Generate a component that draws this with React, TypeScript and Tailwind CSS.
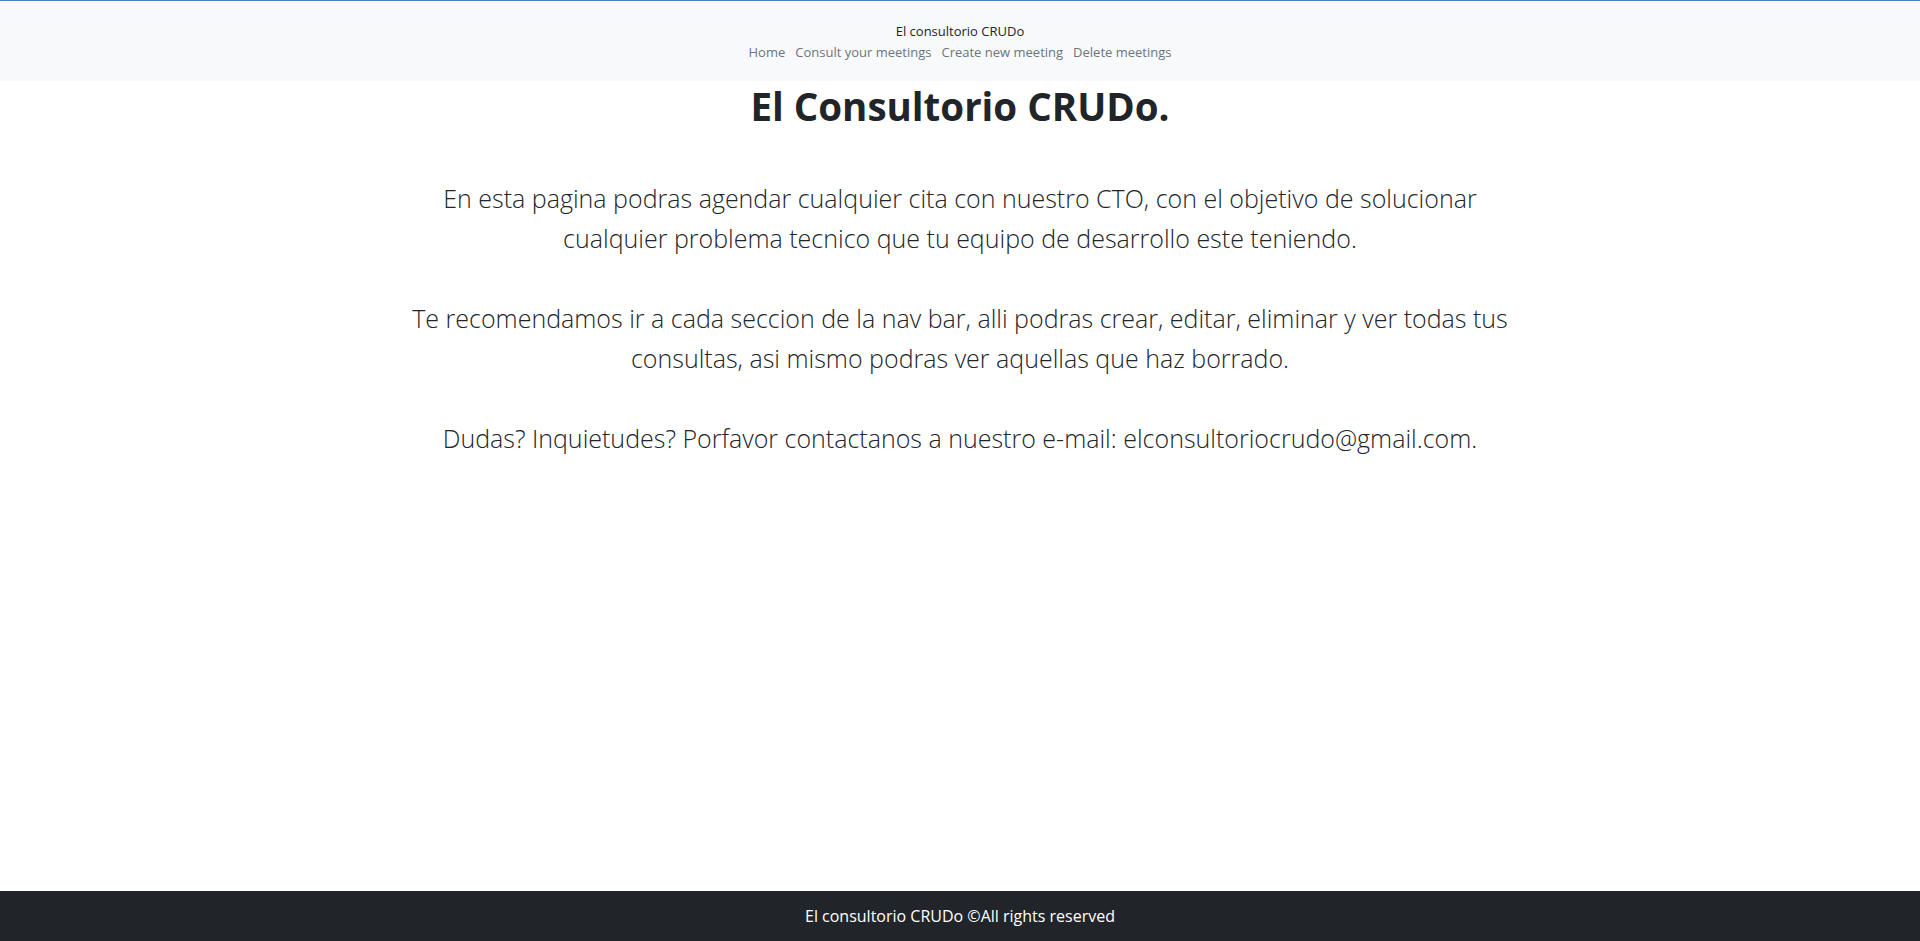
const navLinks = ["Home", "Consult your meetings", "Create new meeting", "Delete meetings"];

const Navbar = () => (
  <nav className="h-[81px] shrink-0 border-t border-[#4a7fc2] bg-[#f8f9fa] flex flex-col items-center pt-[20px]">
    <a className="text-[13px] leading-[20px] text-[#212529]">El consultorio CRUDo</a>
    <ul className="flex gap-[10px] text-[13px] leading-[20px] text-[#6c757d] mt-[1px]">
      {navLinks.map((l) => (
        <li key={l}>
          <a>{l}</a>
        </li>
      ))}
    </ul>
  </nav>
);

const Footer = () => (
  <footer className="h-[50px] shrink-0 bg-[#212529] flex items-center justify-center text-white text-[16px]">
    El consultorio CRUDo ©All rights reserved
  </footer>
);

export default function App() {
  return (
    <div className="h-screen flex flex-col font-['Open_Sans',sans-serif]">
      <Navbar />
      <main className="flex-1 flex flex-col items-center text-center text-[#212529]">
        <h1 className="pt-[1px] text-[38.5px] leading-[48px] font-bold">El Consultorio CRUDo.</h1>
        <div className="mt-[48px] font-light text-[25px] leading-[40px] flex flex-col gap-[40px]">
          <p>
            En esta pagina podras agendar cualquier cita con nuestro CTO, con el objetivo de solucionar
            <br />
            cualquier problema tecnico que tu equipo de desarrollo este teniendo.
          </p>
          <p>
            Te recomendamos ir a cada seccion de la nav bar, alli podras crear, editar, eliminar y ver todas tus
            <br />
            consultas, asi mismo podras ver aquellas que haz borrado.
          </p>
          <p>Dudas? Inquietudes? Porfavor contactanos a nuestro e-mail: elconsultoriocrudo@gmail.com.</p>
        </div>
      </main>
      <Footer />
    </div>
  );
}
